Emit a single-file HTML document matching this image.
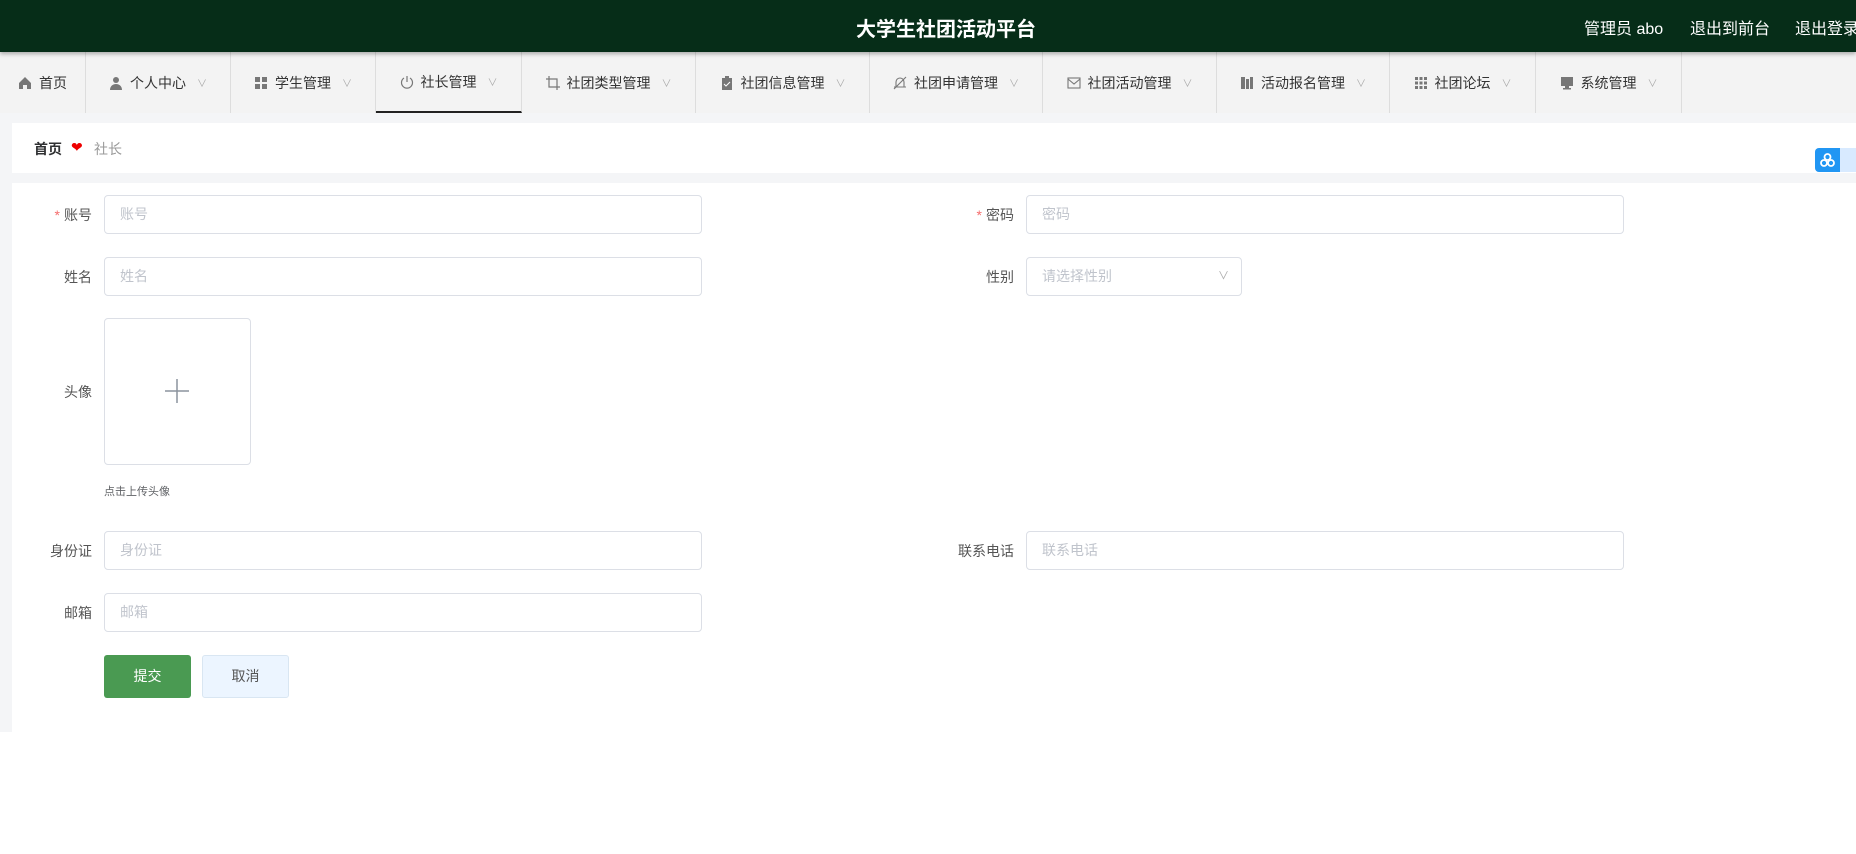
<!DOCTYPE html>
<html><head><meta charset="utf-8"><style>
*{box-sizing:border-box;margin:0;padding:0}
body{width:1856px;height:854px;overflow:hidden;background:#fff;font-family:"Liberation Sans","Noto Sans CJK SC",sans-serif;position:relative}
.hd{position:absolute;left:0;top:0;width:1856px;height:52px;background:#062d18;box-shadow:0 2px 4px rgba(0,0,0,.3);z-index:2}
.hd .t{position:absolute;left:0;width:1892px;text-align:center;top:13px;color:#fff;font-size:20px;font-weight:bold}
.hd .r{position:absolute;top:15px;color:#fff;font-size:16px;white-space:nowrap}
.nav{position:absolute;top:52px;left:0;width:1856px;height:61px;background:#f3f3f3}
.ni{position:absolute;top:0;height:61px;border-right:1px solid #ddd;font-size:14px;color:#333;display:flex;align-items:center;justify-content:center;gap:7px}
.ni.act{border-bottom:2px solid #222}
.ni .ar{color:#aaa;font-size:10px;margin-left:4px}
.ic{width:14px;height:14px;display:inline-block}
.gray{position:absolute;left:0;top:113px;width:1856px;height:619px;background:#f4f5f7}
.bc{position:absolute;left:12px;top:123px;width:1844px;height:50px;background:#fff;font-size:14px}
.form{position:absolute;left:12px;top:183px;width:1844px;height:549px;background:#fff}
.lb{position:absolute;font-size:14px;color:#555;text-align:right;width:80px;white-space:nowrap}
.inp{position:absolute;border:1px solid #dcdfe6;border-radius:4px;height:39px;font-size:14px;color:#c0c4cc;padding:0 15px;line-height:37px;background:#fff}
.req{color:#f56c6c;margin-right:4px}
</style></head><body>
<div class="hd"><div class="t">大学生社团活动平台</div>
<div class="r" style="left:1584px">管理员 abo</div>
<div class="r" style="left:1690px">退出到前台</div>
<div class="r" style="left:1795px">退出登录</div></div>
<div class="nav">
<div class="ni" style="left:0;width:86px"><svg class="ic" viewBox="0 0 14 14"><path d="M1 7L7 1l6 6v6H9V9H5v4H1z" fill="#777"/></svg>首页</div>
<div class="ni" style="left:86px;width:145px"><svg class="ic" viewBox="0 0 14 14"><circle cx="7" cy="4" r="3" fill="#777"/><path d="M1 14c0-4 3-6 6-6s6 2 6 6z" fill="#777"/></svg>个人中心<span class="ar">∨</span></div>
<div class="ni" style="left:231px;width:145px"><svg class="ic" viewBox="0 0 14 14" fill="#777"><rect x="1" y="1" width="5" height="5"/><rect x="8" y="1" width="5" height="5"/><rect x="1" y="8" width="5" height="5"/><rect x="8" y="8" width="5" height="5"/></svg>学生管理<span class="ar">∨</span></div>
<div class="ni act" style="left:376px;width:146px"><svg class="ic" viewBox="0 0 14 14" fill="none" stroke="#777" stroke-width="1.2"><path d="M4 3a5.5 5.5 0 1 0 6 0"/><path d="M7 1v6"/></svg>社长管理<span class="ar">∨</span></div>
<div class="ni" style="left:522px;width:174px"><svg class="ic" viewBox="0 0 14 14" fill="none" stroke="#777" stroke-width="1.2"><path d="M3 0v11h11M0 3h11v11"/></svg>社团类型管理<span class="ar">∨</span></div>
<div class="ni" style="left:696px;width:174px"><svg class="ic" viewBox="0 0 14 14"><rect x="2" y="2" width="10" height="12" fill="#777"/><rect x="5" y="0" width="4" height="3" fill="#777"/><path d="M4 8l2 2 4-4" stroke="#fff" fill="none"/></svg>社团信息管理<span class="ar">∨</span></div>
<div class="ni" style="left:870px;width:173px"><svg class="ic" viewBox="0 0 14 14" fill="none" stroke="#777" stroke-width="1.1"><path d="M3 11V6a4 4 0 0 1 8 0v5zM1 11h12M1 13L13 1"/></svg>社团申请管理<span class="ar">∨</span></div>
<div class="ni" style="left:1043px;width:174px"><svg class="ic" viewBox="0 0 14 14" fill="none" stroke="#777" stroke-width="1.1"><rect x="1" y="2" width="12" height="10"/><path d="M1 3l6 5 6-5"/></svg>社团活动管理<span class="ar">∨</span></div>
<div class="ni" style="left:1217px;width:173px"><svg class="ic" viewBox="0 0 14 14" fill="#777"><rect x="1" y="1" width="4" height="12"/><rect x="6" y="3" width="3" height="10"/><rect x="10" y="1" width="3" height="12"/></svg>活动报名管理<span class="ar">∨</span></div>
<div class="ni" style="left:1390px;width:146px"><svg class="ic" viewBox="0 0 14 14" fill="#777"><rect x="1" y="1" width="3" height="3"/><rect x="5.5" y="1" width="3" height="3"/><rect x="10" y="1" width="3" height="3"/><rect x="1" y="5.5" width="3" height="3"/><rect x="5.5" y="5.5" width="3" height="3"/><rect x="10" y="5.5" width="3" height="3"/><rect x="1" y="10" width="3" height="3"/><rect x="5.5" y="10" width="3" height="3"/><rect x="10" y="10" width="3" height="3"/></svg>社团论坛<span class="ar">∨</span></div>
<div class="ni" style="left:1536px;width:146px"><svg class="ic" viewBox="0 0 14 14" fill="#777"><rect x="1" y="1" width="12" height="9"/><rect x="5" y="10" width="4" height="2"/><rect x="3" y="12" width="8" height="1.5"/></svg>系统管理<span class="ar">∨</span></div>
</div>
<div class="gray"></div>
<div class="bc"><span style="position:absolute;left:22px;top:16px;color:#303133;font-weight:bold">首页</span><span style="position:absolute;left:59px;top:16px;color:#e00;font-size:14px">❤</span><span style="position:absolute;left:82px;top:16px;color:#999">社长</span></div>
<div style="position:absolute;left:1815px;top:148px;width:41px;height:24px;background:#d8eaff;border-radius:4px 0 0 4px"><div style="width:25px;height:24px;background:#2196f3;border-radius:4px 0 0 4px"><svg width="25" height="24"><circle cx="12.5" cy="9" r="3" fill="none" stroke="#fff" stroke-width="1.8"/><circle cx="9" cy="15" r="3" fill="none" stroke="#fff" stroke-width="1.8"/><circle cx="16" cy="15" r="3" fill="none" stroke="#fff" stroke-width="1.8"/></svg></div></div>
<div class="form"></div>
<div class="lb" style="left:12px;top:205px"><span class="req">*</span>账号</div>
<div class="inp" style="left:104px;top:195px;width:598px">账号</div>
<div class="lb" style="left:934px;top:205px"><span class="req">*</span>密码</div>
<div class="inp" style="left:1026px;top:195px;width:598px">密码</div>
<div class="lb" style="left:12px;top:267px">姓名</div>
<div class="inp" style="left:104px;top:257px;width:598px">姓名</div>
<div class="lb" style="left:934px;top:267px">性别</div>
<div class="inp" style="left:1026px;top:257px;width:216px">请选择性别<span style="position:absolute;right:12px;color:#aaa;font-size:11px">∨</span></div>
<div class="lb" style="left:12px;top:382px">头像</div>
<div style="position:absolute;left:104px;top:318px;width:147px;height:147px;border:1px solid #dcdfe6;border-radius:4px"><svg style="position:absolute;left:60px;top:60px" width="24" height="24"><path d="M12 0v24M0 12h24" stroke="#8c939d" stroke-width="1.5"/></svg></div>
<div style="position:absolute;left:104px;top:483px;font-size:11px;color:#606266">点击上传头像</div>
<div class="lb" style="left:12px;top:541px">身份证</div>
<div class="inp" style="left:104px;top:531px;width:598px">身份证</div>
<div class="lb" style="left:934px;top:541px">联系电话</div>
<div class="inp" style="left:1026px;top:531px;width:598px">联系电话</div>
<div class="lb" style="left:12px;top:603px">邮箱</div>
<div class="inp" style="left:104px;top:593px;width:598px">邮箱</div>
<div style="position:absolute;left:104px;top:655px;width:87px;height:43px;background:#4a9a52;border-radius:3px;color:#fff;font-size:14px;text-align:center;line-height:43px">提交</div>
<div style="position:absolute;left:202px;top:655px;width:87px;height:43px;background:#ecf5ff;border:1px solid #d9e6f2;border-radius:3px;color:#555;font-size:14px;text-align:center;line-height:41px">取消</div>
</body></html>
